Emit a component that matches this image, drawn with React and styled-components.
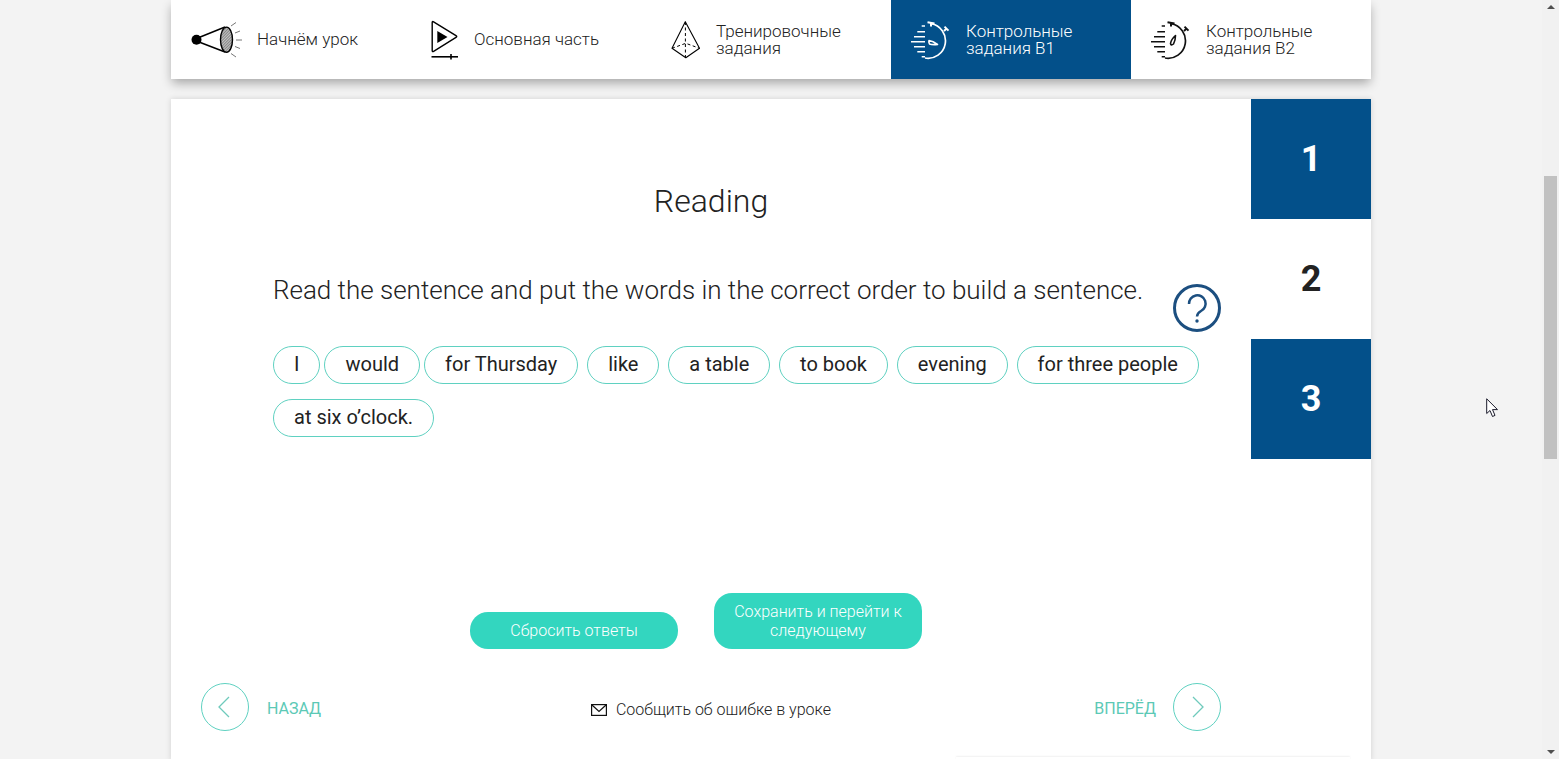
import React from 'react';
import styled, { createGlobalStyle } from 'styled-components';

const BLUE = '#03508a';
const TEAL = '#33d6bf';
const TEAL_LINE = '#5fd1c1';
const TEXT = '#222222';

const GlobalStyle = createGlobalStyle`
  html, body {
    margin: 0;
    height: 100%;
    overflow: hidden;
    background: #f3f3f3;
    font-family: Roboto, "Noto Sans", sans-serif;
    color: ${TEXT};
  }
`;

const Viewport = styled.div`
  position: relative;
  display: flex;
  height: 759px;
  overflow: hidden;
`;

const Page = styled.div`
  flex: 1;
  display: flex;
  flex-direction: column;
  align-items: center;
  gap: 20px;
`;

const TopNav = styled.nav`
  width: 1200px;
  height: 79px;
  flex: none;
  display: flex;
  background: #fff;
  box-shadow: 0 5px 10px -1px rgba(0, 0, 0, 0.32);
`;

const NavItem = styled.a`
  width: 240px;
  padding-left: 20px;
  box-sizing: border-box;
  display: flex;
  align-items: center;
  gap: 15px;
  font-size: 17px;
  font-weight: 300;
  line-height: 17px;
  color: ${props => (props.$active ? '#fff' : TEXT)};
  background: ${props => (props.$active ? BLUE : 'transparent')};
`;

const NavIcon = styled.svg`
  flex: none;
  display: block;
`;

const Card = styled.main`
  width: 1200px;
  flex: 1;
  display: flex;
  background: #fff;
  box-shadow: 0 0 6px rgba(0, 0, 0, 0.14);
`;

const Lesson = styled.section`
  width: 1080px;
  padding-top: 82px;
  box-sizing: border-box;
  display: flex;
  flex-direction: column;
`;

const Title = styled.h1`
  margin: 0;
  font-size: 32px;
  font-weight: 300;
  line-height: 40px;
  text-align: center;
`;

const TaskRow = styled.div`
  margin-top: 54px;
  padding: 0 30px 0 102px;
  display: flex;
  justify-content: space-between;
  align-items: flex-start;
`;

const Instruction = styled.p`
  margin: 0;
  font-size: 26px;
  font-weight: 300;
  line-height: 30px;
  letter-spacing: -0.012px;
  white-space: nowrap;
`;

const HelpButton = styled.svg`
  display: block;
  margin-top: 9px;
  flex: none;
`;

const Chips = styled.div`
  margin-top: 14px;
  padding: 0 30px 0 102px;
  display: flex;
  flex-wrap: wrap;
  row-gap: 15px;
`;

const Chip = styled.span`
  height: 38px;
  box-sizing: border-box;
  padding: 0 20px 2px;
  margin-right: ${props => (props.$tight ? 4 : 8.85)}px;
  display: flex;
  align-items: center;
  border: 1px solid ${TEAL_LINE};
  border-radius: 19px;
  font-size: 20px;
  white-space: nowrap;
`;

const Actions = styled.div`
  margin-top: 156px;
  padding-left: 299px;
  display: flex;
  align-items: flex-end;
  gap: 36px;
`;

const ActionButton = styled.button`
  width: 208px;
  min-height: 37px;
  padding: 9px 16px;
  box-sizing: border-box;
  border: 0;
  border-radius: 18px;
  background: ${TEAL};
  color: #fff;
  font-family: inherit;
  font-size: 16px;
  font-weight: 300;
  line-height: 19px;
`;

const Pager = styled.div`
  margin-top: 34px;
  padding: 0 30px;
  display: grid;
  grid-template-columns: 1fr auto 1fr;
  align-items: center;
`;

const PagerLink = styled.a`
  display: flex;
  align-items: center;
  justify-self: ${props => (props.$end ? 'end' : 'start')};
  gap: ${props => (props.$end ? 17 : 18)}px;
  font-size: 16px;
  font-weight: 400;
  color: #5cc9b6;
`;

const PagerLabel = styled.span`
  padding-top: ${props => props.$drop}px;
`;

const Report = styled.a`
  display: flex;
  align-items: center;
  gap: 9px;
  padding-top: 5px;
  font-size: 16px;
  font-weight: 300;
`;

const Divider = styled.div`
  align-self: flex-end;
  width: 394px;
  height: 4px;
  margin: 26px -99px 0 0;
  box-shadow: 0 -1px 2px rgba(0, 0, 0, 0.06);
`;

const Steps = styled.aside`
  width: 120px;
  display: flex;
  flex-direction: column;
`;

const Step = styled.div`
  height: 120px;
  display: flex;
  align-items: center;
  justify-content: center;
  font-size: 36px;
  font-weight: 700;
  background: ${props => (props.$current ? '#fff' : BLUE)};
  color: ${props => (props.$current ? TEXT : '#fff')};
`;

const Scrollbar = styled.div`
  width: 17px;
  flex: none;
  display: flex;
  flex-direction: column;
  align-items: center;
  background: #f1f1f1;
`;

const ScrollArrow = styled.span`
  width: 0;
  height: 0;
  margin-top: ${props => (props.$down ? 'auto' : '5px')};
  margin-bottom: ${props => (props.$down ? '5px' : '0')};
  border-left: 4px solid transparent;
  border-right: 4px solid transparent;
  border-top: ${props => (props.$down ? `4px solid #505050` : '0')};
  border-bottom: ${props => (props.$down ? '0' : `4px solid #505050`)};
`;

const ScrollThumb = styled.div`
  width: 13px;
  height: 283px;
  margin-top: 167px;
  background: #c1c1c1;
`;

const Cursor = styled.svg`
  position: absolute;
  left: 1486px;
  top: 398px;
`;

const Megaphone = () => (
  <NavIcon width="51" height="40" viewBox="0 0 51 40">
    <defs>
      <pattern id="hatch" width="2" height="2" patternUnits="userSpaceOnUse" patternTransform="rotate(45)">
        <rect width="2" height="2" fill="#c4c4c4" />
        <rect width="1" height="2" fill="#858585" />
      </pattern>
    </defs>
    <circle cx="5.5" cy="19.7" r="5" fill="#000" />
    <path d="M8 17.5 L34 7 M8 22 L34 32" stroke="#000" strokeWidth="1.5" />
    <ellipse cx="35.5" cy="19.7" rx="6" ry="12.6" fill="url(#hatch)" stroke="#000" strokeWidth="1.4" />
    <path d="M40 6 L45 2.5 M44 13 L49 11 M45 20 L51 20 M44 26.5 L49 28.5 M40 33.5 L45 37" stroke="#777" strokeWidth="1" fill="none" />
  </NavIcon>
);

const PlayIcon = () => (
  <NavIcon width="28" height="42" viewBox="0 0 28 42">
    <path d="M1.2 3.5 Q1.2 2 2.6 2.8 L25 16.6 Q26.5 17.5 25 18.4 L2.6 32.4 Q1.2 33.2 1.2 31.6 Z" fill="none" stroke="#000" strokeWidth="1.4" />
    <path d="M6.3 12 L16.5 18 L6.3 24 Z" fill="#000" />
    <path d="M0.5 37.8 H27" stroke="#000" strokeWidth="1.6" />
    <path d="M20 35 V40.5" stroke="#000" strokeWidth="1.6" />
  </NavIcon>
);

const PyramidIcon = () => (
  <NavIcon width="30" height="40" viewBox="0 0 30 40">
    <path d="M14.3 1.7 L1 28.3 L14.8 37.7 L28.5 28.3 Z" fill="none" stroke="#000" strokeWidth="1.1" strokeLinejoin="round" />
    <path d="M14.4 2 V37 M1 28.3 L14.8 23.3 L28.5 28.3" fill="none" stroke="#000" strokeWidth="1" strokeDasharray="3 2.5" />
  </NavIcon>
);

const Stopwatch = ({ color, needle }) => (
  <NavIcon width="40" height="40" viewBox="0 0 40 40">
    <g stroke={color} fill="none" strokeWidth="1.7">
      <path d="M20 3.6 A17.4 17.4 0 1 1 14 38" />
      <path d="M16.5 2.2 L23.5 3.4 M20 3 V6.5" strokeWidth="2" />
      <path d="M33.5 6.6 L37.5 10.6 M35.5 8.6 L33 11" strokeWidth="2" />
      <path d="M10.7 6 H14 M6.3 11.7 H14 M3 16.7 H14 M0 21.7 H14 M3 26.7 H14 M6.3 31.7 H14 M10.7 36.7 H14" strokeWidth="1.5" />
      <path d={needle} strokeWidth="1.6" strokeLinejoin="round" />
    </g>
  </NavIcon>
);

const Envelope = () => (
  <svg width="16" height="12" viewBox="0 0 16 12">
    <rect x="0.6" y="0.6" width="14.8" height="10.8" fill="none" stroke="#111" strokeWidth="1.2" />
    <path d="M1 1 L8 7.5 L15 1" fill="none" stroke="#111" strokeWidth="1.2" />
  </svg>
);

const RoundArrow = ({ flip }) => (
  <svg width="48" height="48" viewBox="0 0 48 48">
    <circle cx="24" cy="24" r="23.5" fill="none" stroke={TEAL_LINE} strokeWidth="1" />
    <path d={flip ? 'M20 14 L30 24 L20 34' : 'M28 14 L18 24 L28 34'} fill="none" stroke="#6fcabc" strokeWidth="1.3" />
  </svg>
);

const words = [
  { text: 'I', tight: true },
  { text: 'would', tight: true },
  { text: 'for Thursday' },
  { text: 'like' },
  { text: 'a table' },
  { text: 'to book' },
  { text: 'evening' },
  { text: 'for three people' },
  { text: 'at six o’clock.' },
];

export default function App() {
  return (
    <Viewport>
      <GlobalStyle />
      <Page>
        <TopNav>
          <NavItem><Megaphone />Начнём урок</NavItem>
          <NavItem><PlayIcon />Основная часть</NavItem>
          <NavItem><PyramidIcon /><span>Тренировочные<br />задания</span></NavItem>
          <NavItem $active>
            <Stopwatch color="#fff" needle="M18 20.5 Q22 21 26.5 24.5 Q21 25 18.5 24 Q17.5 22 18 20.5 Z" />
            <span>Контрольные<br />задания B1</span>
          </NavItem>
          <NavItem>
            <Stopwatch color="#111" needle="M24.5 15.5 Q24.5 20 22.5 24 Q20 26 19.5 23.5 Q20 19.5 24.5 15.5 Z" />
            <span>Контрольные<br />задания B2</span>
          </NavItem>
        </TopNav>
        <Card>
          <Lesson>
            <Title>Reading</Title>
            <TaskRow>
              <Instruction>Read the sentence and put the words in the correct order to build a sentence.</Instruction>
              <HelpButton width="48" height="48" viewBox="0 0 48 48">
                <circle cx="24" cy="24" r="22.5" fill="none" stroke="#1c4f80" strokeWidth="3" />
                <path d="M16 20 A8.3 8.3 0 1 1 28 27 Q24.3 29 24 32.5" fill="none" stroke="#1c4f80" strokeWidth="2.5" />
                <circle cx="24" cy="37" r="1.7" fill="#1c4f80" />
              </HelpButton>
            </TaskRow>
            <Chips>
              {words.map(word => (
                <Chip key={word.text} $tight={word.tight}>{word.text}</Chip>
              ))}
            </Chips>
            <Actions>
              <ActionButton>Сбросить ответы</ActionButton>
              <ActionButton>Сохранить и перейти к следующему</ActionButton>
            </Actions>
            <Pager>
              <PagerLink><RoundArrow /><PagerLabel $drop={2}>НАЗАД</PagerLabel></PagerLink>
              <Report><Envelope />Сообщить об ошибке в уроке</Report>
              <PagerLink $end><PagerLabel $drop={3}>ВПЕРЁД</PagerLabel><RoundArrow flip /></PagerLink>
            </Pager>
            <Divider />
          </Lesson>
          <Steps>
            <Step>1</Step>
            <Step $current>2</Step>
            <Step>3</Step>
          </Steps>
        </Card>
      </Page>
      <Scrollbar>
        <ScrollArrow />
        <ScrollThumb />
        <ScrollArrow $down />
      </Scrollbar>
      <Cursor width="13" height="20" viewBox="0 0 13 20">
        <path d="M0.7 0.8 V15.5 L4 12.5 L6.5 18.5 L9 17.4 L6.5 11.6 L11.5 11.6 Z" fill="#fff" stroke="#1a1a2a" strokeWidth="1" strokeLinejoin="miter" />
      </Cursor>
    </Viewport>
  );
}
